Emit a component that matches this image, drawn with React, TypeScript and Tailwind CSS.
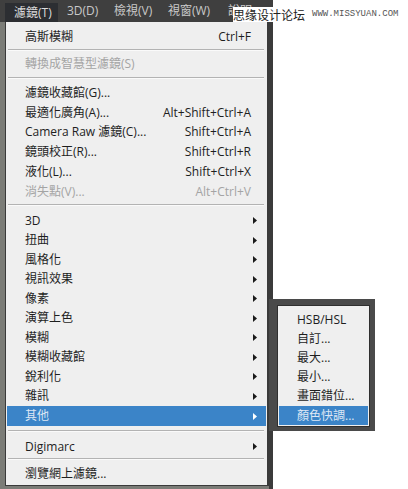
import { Fragment } from 'react';

type Item =
  | { kind: 'sep'; h: string; pos: string }
  | { kind: 'item'; label: string; h: string; shortcut?: string; disabled?: boolean; sub?: boolean; active?: boolean };

const sep = (h: string, pos: string): Item => ({ kind: 'sep', h, pos });
const row = (label: string, h: string, extra: Partial<Extract<Item, { kind: 'item' }>> = {}): Item => ({
  kind: 'item',
  label,
  h,
  ...extra,
});

const MENU: Item[] = [
  row('高斯模糊', 'h-[20px]', { shortcut: 'Ctrl+F' }),
  sep('h-[7px]', 'pt-[2px]'),
  row('轉換成智慧型濾鏡(S)', 'h-[20px]', { disabled: true }),
  sep('h-[9px]', 'pt-[3px]'),
  row('濾鏡收藏館(G)...', 'h-[19.8px]'),
  row('最適化廣角(A)...', 'h-[19.8px]', { shortcut: 'Alt+Shift+Ctrl+A' }),
  row('Camera Raw 濾鏡(C)...', 'h-[19.8px]', { shortcut: 'Shift+Ctrl+A' }),
  row('鏡頭校正(R)...', 'h-[19.8px]', { shortcut: 'Shift+Ctrl+R' }),
  row('液化(L)...', 'h-[19.8px]', { shortcut: 'Shift+Ctrl+X' }),
  row('消失點(V)...', 'h-[19.8px]', { shortcut: 'Alt+Ctrl+V', disabled: true }),
  sep('h-[9px]', 'pt-[2px]'),
  ...['3D', '扭曲', '風格化', '視訊效果', '像素', '演算上色', '模糊', '模糊收藏館', '銳利化', '雜訊'].map((l) =>
    row(l, 'h-[19.55px]', { sub: true })
  ),
  row('其他', 'h-[19.55px]', { sub: true, active: true }),
  sep('h-[11px]', 'pt-[4px]'),
  row('Digimarc', 'h-[20px]', { sub: true }),
  sep('h-[7px]', 'pt-[1px]'),
  row('瀏覽網上濾鏡...', 'h-[20px]'),
];

const SUBMENU = ['HSB/HSL', '自訂...', '最大...', '最小...', '畫面錯位...', '顏色快調...'];

const Arrow = ({ light }: { light?: boolean }) => (
  <svg width="4" height="7" viewBox="0 0 4 7" className="shrink-0">
    <path d="M0 0 L4 3.5 L0 7 Z" fill={light ? '#ffffff' : '#1a1a1a'} />
  </svg>
);

export default function App() {
  return (
    <div
      className="relative w-[408px] h-[489px] bg-white overflow-hidden text-[12px] leading-none"
      style={{ fontFamily: '"Open Sans", "Noto Sans CJK TC", sans-serif' }}
    >
      <div className="flex flex-col w-[273px] h-full bg-[#3c3c3c]">
        {/* menu bar */}
        <div className="h-[22px] shrink-0 bg-[#3f3f3f] flex items-stretch pl-[5px] text-[#c9c9c9]">
          <div className="mt-[3px] w-[53px] bg-[#2c2e32] flex items-center pl-[9px] text-[#dcdcdc]">濾鏡(T)</div>
          <div className="flex items-center pl-[9px] w-[56px]">3D(D)</div>
          <div className="flex items-center w-[54px]">檢視(V)</div>
          <div className="flex items-center w-[60px]">視窗(W)</div>
          <div className="flex items-center whitespace-nowrap">說明</div>
        </div>

        <div className="flex flex-1 min-h-0">
          <div className="w-[5px] bg-[#7b7c77]" />
          <div className="w-[264px] flex flex-col bg-[#7b7c77]">
            <div className="flex flex-col bg-[#efefef] border-l border-r-2 border-b border-[#3a3a3a] pt-[5px] pb-[1px]">
              {MENU.map((it, i) =>
                it.kind === 'sep' ? (
                  <div key={i} className={`${it.h} ${it.pos} pl-[2px] pr-[3px]`}>
                    <div className="h-px bg-[#b3b3b3]" />
                    <div className="h-px bg-[#fafafa]" />
                  </div>
                ) : (
                  <Fragment key={i}>
                    <div
                      className={`${it.h} flex items-center ${
                        it.active
                          ? 'bg-[#3b84c8] text-[#dde7f5] mx-[1px] pl-[18px] pr-[9px]'
                          : it.sub
                            ? 'pl-[19px] pr-[10px]'
                            : 'pl-[19px] pr-[16px]'
                      } ${it.disabled ? 'text-[#a4a4a4]' : it.active ? '' : 'text-[#1e1e1e]'}`}
                    >
                      <span className="flex-1 whitespace-nowrap">{it.label}</span>
                      {it.shortcut && <span className="whitespace-nowrap">{it.shortcut}</span>}
                      {it.sub && <Arrow light={it.active} />}
                    </div>
                  </Fragment>
                )
              )}
            </div>
          </div>
          <div className="flex-1 bg-[#3b3b3b]" />
        </div>
      </div>

      {/* watermark */}
      <div className="absolute left-[233px] top-[7px] h-[15px] flex items-center gap-[7px] pr-[6px] bg-white whitespace-nowrap">
        <span className="text-[12px] text-[#222]" style={{ fontFamily: '"Noto Sans CJK SC", sans-serif' }}>
          思缘设计论坛
        </span>
        <span className="text-[9px] text-[#555]" style={{ fontFamily: '"Liberation Mono", monospace' }}>
          WWW.MISSYUAN.COM
        </span>
      </div>

      {/* submenu flyout */}
      <div className="absolute left-[269px] top-[299px] w-[106px] h-[132px] bg-[#4a4a4a] flex pt-[6px] pl-[8px]">
        <div className="w-[93px] h-[122px] bg-[#efefef] border border-[#2f2f2f] flex flex-col pt-[4px]">
          {SUBMENU.map((s, i) => {
            const active = i === SUBMENU.length - 1;
            return (
              <div
                key={s}
                className={`h-[19.2px] flex items-center whitespace-nowrap ${
                  active ? 'bg-[#3b84c8] text-[#dde7f5] mx-[1px] pl-[18px]' : 'pl-[19px] text-[#1e1e1e]'
                }`}
              >
                {s}
              </div>
            );
          })}
        </div>
      </div>
    </div>
  );
}
